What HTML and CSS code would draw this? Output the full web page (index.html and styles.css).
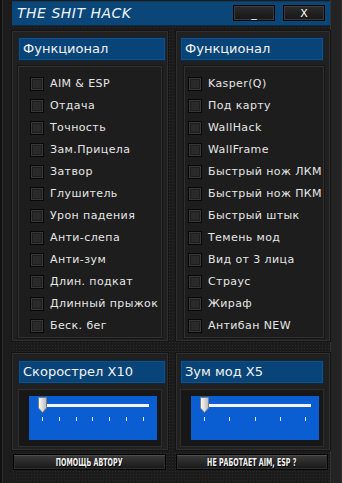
FILE: index.html
```html
<!DOCTYPE html>
<html lang="ru">
<head>
    <meta charset="UTF-8">
    <title>THE SHIT HACK</title>
    <link rel="stylesheet" href="styles.css">
</head>
<body>
    <div class="window">
        <header class="titlebar">
            <span class="title">THE SHIT HACK</span>
            <div class="title-buttons">
                <button class="tbtn">_</button>
                <button class="tbtn">X</button>
            </div>
        </header>

        <main class="main">
            <section class="group group-left">
                <div class="group-head">Функционал</div>
                <ul class="options">
                    <li><span class="check"></span>AIM &amp; ESP</li>
                    <li><span class="check"></span>Отдача</li>
                    <li><span class="check"></span>Точность</li>
                    <li><span class="check"></span>Зам.Прицела</li>
                    <li><span class="check"></span>Затвор</li>
                    <li><span class="check"></span>Глушитель</li>
                    <li><span class="check"></span>Урон падения</li>
                    <li><span class="check"></span>Анти-слепа</li>
                    <li><span class="check"></span>Анти-зум</li>
                    <li><span class="check"></span>Длин. подкат</li>
                    <li><span class="check"></span>Длинный прыжок</li>
                    <li><span class="check"></span>Беск. бег</li>
                </ul>
            </section>

            <section class="group group-right">
                <div class="group-head">Функционал</div>
                <ul class="options">
                    <li><span class="check"></span>Kasper(Q)</li>
                    <li><span class="check"></span>Под карту</li>
                    <li><span class="check"></span>WallHack</li>
                    <li><span class="check"></span>WallFrame</li>
                    <li><span class="check"></span>Быстрый нож ЛКМ</li>
                    <li><span class="check"></span>Быстрый нож ПКМ</li>
                    <li><span class="check"></span>Быстрый штык</li>
                    <li><span class="check"></span>Темень мод</li>
                    <li><span class="check"></span>Вид от 3 лица</li>
                    <li><span class="check"></span>Страус</li>
                    <li><span class="check"></span>Жираф</li>
                    <li><span class="check"></span>Антибан NEW</li>
                </ul>
            </section>

            <section class="group slider-group group-left">
                <div class="group-head">Скорострел X10</div>
                <div class="slider-box">
                    <div class="slider">
                        <div class="track">
                            <svg class="thumb" width="9" height="16" viewBox="0 0 9 16">
                                <defs>
                                    <linearGradient id="tg1" x1="0" y1="0" x2="1" y2="0">
                                        <stop offset="0" stop-color="#ffffff"/>
                                        <stop offset="1" stop-color="#b9b9b9"/>
                                    </linearGradient>
                                </defs>
                                <path d="M0.5 0.5 H8.5 V11 L4.5 15.5 L0.5 11 Z" fill="url(#tg1)" stroke="#7d7d7d"/>
                            </svg>
                        </div>
                        <div class="ticks">
                            <i></i><i></i><i></i><i></i><i></i><i></i><i></i>
                        </div>
                    </div>
                </div>
            </section>

            <section class="group slider-group group-right">
                <div class="group-head">Зум мод X5</div>
                <div class="slider-box">
                    <div class="slider">
                        <div class="track">
                            <svg class="thumb" width="9" height="16" viewBox="0 0 9 16">
                                <defs>
                                    <linearGradient id="tg2" x1="0" y1="0" x2="1" y2="0">
                                        <stop offset="0" stop-color="#ffffff"/>
                                        <stop offset="1" stop-color="#b9b9b9"/>
                                    </linearGradient>
                                </defs>
                                <path d="M0.5 0.5 H8.5 V11 L4.5 15.5 L0.5 11 Z" fill="url(#tg2)" stroke="#7d7d7d"/>
                            </svg>
                        </div>
                        <div class="ticks">
                            <i></i><i></i><i></i><i></i><i></i>
                        </div>
                    </div>
                </div>
            </section>

            <button class="btn btn-left"><span>ПОМОЩЬ АВТОРУ</span></button>
            <button class="btn btn-right"><span>НЕ РАБОТАЕТ AIM, ESP ?</span></button>
        </main>
    </div>
</body>
</html>
```

FILE: styles.css
```css
* {
    margin: 0;
    padding: 0;
    box-sizing: border-box;
}

body {
    background: #1a1a1a;
    font-family: 'DejaVu Sans', Verdana, sans-serif;
    color: #e8e8e8;
    overflow: hidden;
}

.window {
    width: 342px;
    height: 483px;
    padding: 0 12px;
    background: #1c1c1c;
    box-shadow: inset 2px 0 #111, inset 3px 0 #2e2e2e, inset -1px 0 #2e2e2e, inset -11px 0 #232323, inset -12px 0 #333;
    display: flex;
    flex-direction: column;
}

/* Title bar */
.titlebar {
    height: 25px;
    margin-top: 1px;
    background: #0b4679;
    border-top: 1px solid #123a5c;
    border-bottom: 1px solid #0a2b48;
    display: flex;
    align-items: center;
    justify-content: space-between;
    padding: 0 5px 2px 5px;
}

.title {
    font-family: 'DejaVu Sans', sans-serif;
    font-style: italic;
    font-size: 14px;
    letter-spacing: 0.5px;
    color: #eef3f8;
    margin-top: 1px;
}

.title-buttons {
    display: flex;
    gap: 8px;
    margin-top: 1px;
}

.tbtn {
    width: 42px;
    height: 16px;
    background: linear-gradient(#2c2c2c, #161616);
    border: 1px solid #050505;
    box-shadow: inset 0 0 0 1px #3a3a3a;
    color: #fff;
    font-family: 'DejaVu Sans', sans-serif;
    font-size: 11px;
    line-height: 13px;
}

/* Main area */
.main {
    flex: 1;
    display: grid;
    grid-template-columns: 156px 154px;
    column-gap: 8px;
    align-content: start;
    padding-top: 5px;
    background-color: #1b1b1b;
    background-image: radial-gradient(#2b2b2b 0.7px, transparent 0.9px);
    background-size: 3px 3px;
}

.group {
    height: 310px;
    background: #202020;
    border: 1px solid #2f2f2f;
    box-shadow: 0 0 0 1px #141414;
}

.group-head {
    height: 24px;
    margin-top: 5px;
    background: #084477;
    border: 1px solid #10273c;
    box-shadow: inset 0 0 0 1px #0d5188;
    padding-left: 4px;
    font-size: 13px;
    line-height: 22px;
    color: #f2f2f2;
}

.group-left .group-head {
    margin-left: 5px;
    margin-right: 1px;
}

.group-right .group-head {
    margin-left: 3px;
    margin-right: 5px;
}

.options {
    list-style: none;
    height: 272px;
    margin-top: 5px;
    background: #1d1d1d;
    border: 1px solid #303030;
    box-shadow: 0 0 0 1px #161616;
    padding-top: 5px;
}

.group-left .options {
    margin-left: 5px;
    margin-right: 5px;
    padding-left: 11px;
}

.group-right .options {
    margin-left: 7px;
    margin-right: 5px;
    padding-left: 3px;
}

.options li {
    height: 22px;
    display: flex;
    align-items: center;
    font-size: 11px;
    letter-spacing: 0.4px;
    color: #e6e6e6;
}

.check {
    width: 14px;
    height: 14px;
    margin-right: 6px;
    margin-top: 1px;
    background: #2a2a2a;
    border: 1px solid #080808;
    box-shadow: inset 0 0 0 1px #383838, inset 0 0 0 2px #1e1e1e;
}

/* Slider groups */
.slider-group {
    height: 97px;
    margin-top: 12px;
}

.slider-group .group-head {
    margin-top: 6px;
}

.slider-box {
    height: 58px;
    margin-top: 5px;
    background: #171717;
    border: 1px solid #2e2e2e;
    padding: 6px 4px 0 10px;
}

.group-left .slider-box {
    margin-left: 5px;
    margin-right: 5px;
}

.group-right .slider-box {
    margin-left: 3px;
    margin-right: 5px;
}

.slider {
    height: 44px;
    background: #0b5dd2;
    padding-top: 8px;
}

.track {
    position: relative;
    height: 3px;
    margin: 0 8px 0 10px;
    background: #f4f4f4;
}

.thumb {
    position: absolute;
    left: -1px;
    top: -7px;
}

.ticks {
    display: flex;
    justify-content: space-between;
    padding: 0 13px;
    margin-top: 10px;
}

.ticks i {
    width: 1px;
    height: 4px;
    background: #dfe8f5;
}

/* Bottom buttons */
.btn {
    height: 16px;
    margin-top: 4px;
    background: linear-gradient(#3a3a3a, #181818);
    border: 1px solid #050505;
    box-shadow: inset 0 1px 0 #4c4c4c, inset 0 0 0 1px #2e2e2e;
    color: #f4f4f4;
    font-family: 'DejaVu Sans Condensed', 'DejaVu Sans', sans-serif;
    font-weight: bold;
    font-size: 11px;
    line-height: 13px;
    overflow: hidden;
    text-shadow: 1px 1px 0 #000;
}

.btn span {
    display: inline-block;
    transform: scaleX(0.64);
}

.btn-left {
    width: 153px;
    margin-left: 1px;
}

.btn-right {
    width: 152px;
}
```
